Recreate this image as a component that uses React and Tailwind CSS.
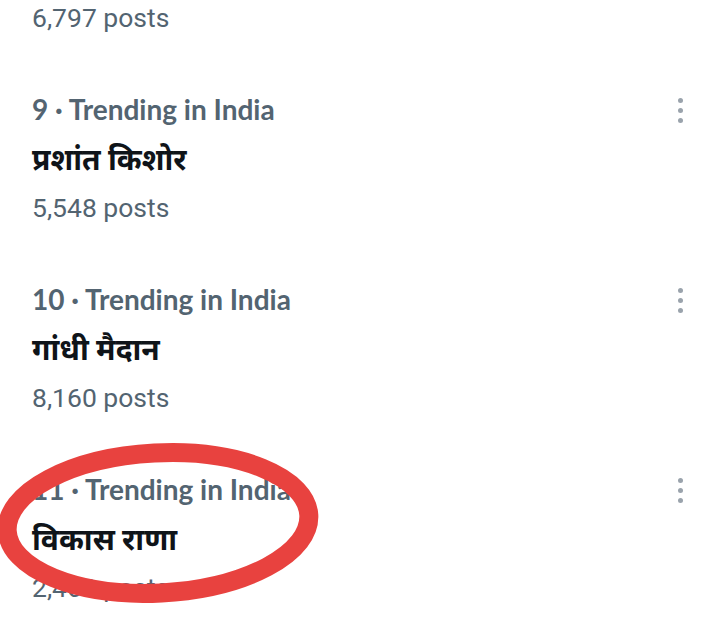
import React from 'react';

const trends = [
  { rank: 9, title: 'प्रशांत किशोर', posts: '5,548 posts' },
  { rank: 10, title: 'गांधी मैदान', posts: '8,160 posts' },
  { rank: 11, title: 'विकास राणा', posts: '2,460 posts' },
];

function Dots() {
  return (
    <div className="flex flex-col items-center gap-[5px] pt-[13px]">
      <span className="block w-[5px] h-[5px] rounded-full bg-[#9aa3ac]" />
      <span className="block w-[5px] h-[5px] rounded-full bg-[#9aa3ac]" />
      <span className="block w-[5px] h-[5px] rounded-full bg-[#9aa3ac]" />
    </div>
  );
}

export default function App() {
  return (
    <div
      className="relative w-[720px] h-[634px] overflow-hidden bg-white"
      style={{ fontFamily: '"Lato", "Noto Sans", "Noto Sans Devanagari", sans-serif' }}
    >
      <div className="pl-[32px] pr-[37px]">
        <div className="mt-[-7px] h-[50px] leading-[50px] text-[26.5px] text-[#536471] font-['Roboto',sans-serif]">
          6,797 posts
        </div>
        <div className="h-[21px]" />
        {trends.map((t) => (
          <div key={t.rank} className="flex justify-between py-[21px]">
            <div className="flex flex-col">
              <div className="h-[48px] leading-[48px] text-[28px] font-bold text-[#536471]">
                {t.rank} · Trending in India
              </div>
              <div className="h-[50px] leading-[50px] text-[30px] font-bold text-[#0f1419]">
                {t.title}
              </div>
              <div className="h-[50px] leading-[50px] text-[26.5px] text-[#536471] font-['Roboto',sans-serif]">
                {t.posts}
              </div>
            </div>
            <Dots />
          </div>
        ))}
      </div>
      <svg className="absolute left-0 top-0 pointer-events-none" width="720" height="634" viewBox="0 0 720 634">
        <ellipse
          cx="158"
          cy="523"
          rx="151"
          ry="70"
          transform="rotate(-3 158 523)"
          fill="none"
          stroke="#e8423f"
          strokeWidth="19"
        />
      </svg>
    </div>
  );
}
